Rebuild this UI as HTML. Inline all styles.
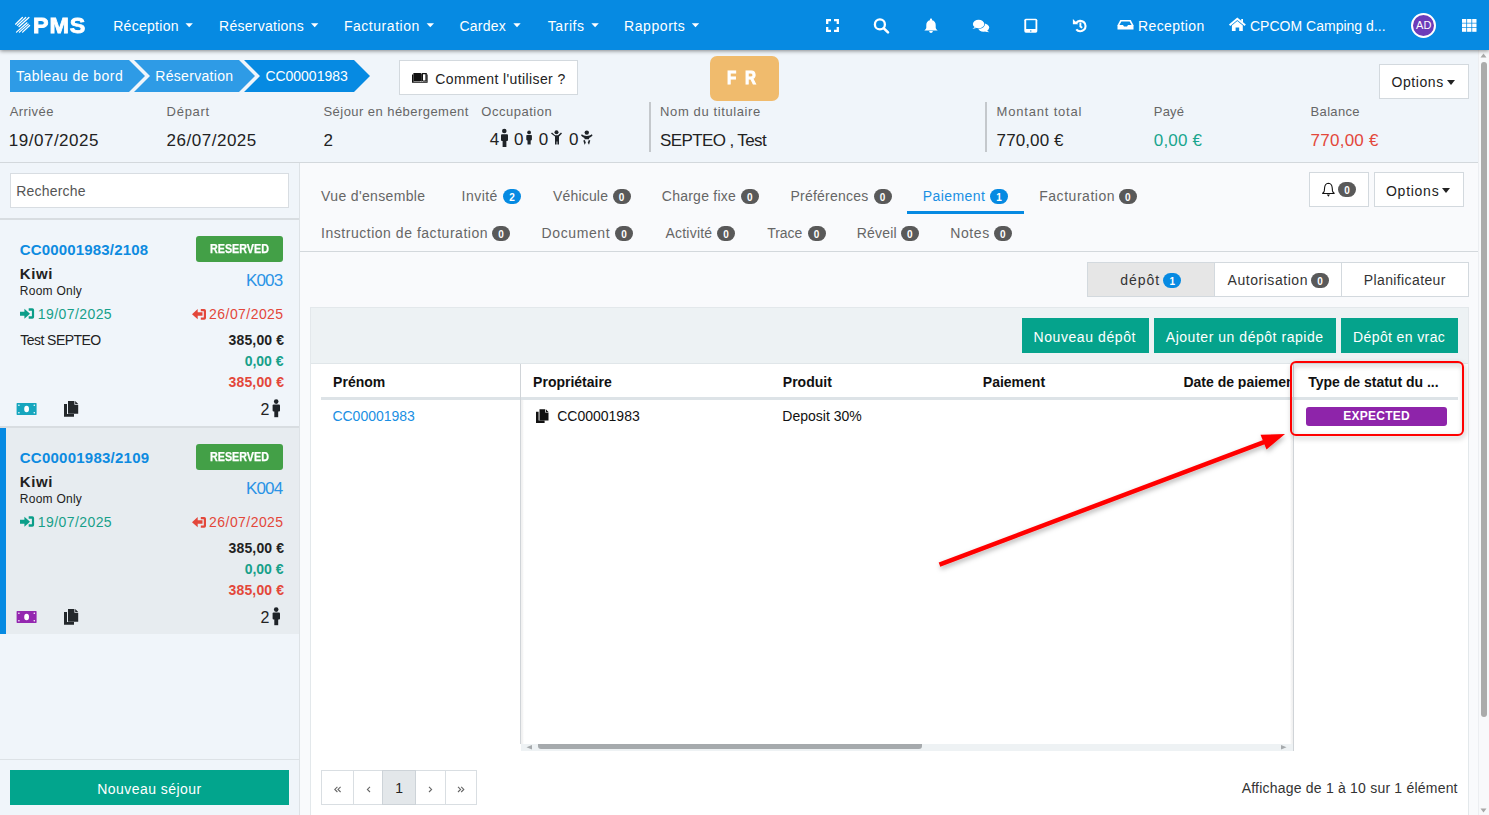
<!DOCTYPE html>
<html><head><meta charset="utf-8">
<style>
*{box-sizing:border-box;margin:0;padding:0}
html,body{width:1489px;height:815px;overflow:hidden}
body{font-family:"Liberation Sans",sans-serif;background:#f0f5fa;color:#222;position:relative}
.a{position:absolute}
.t{position:absolute;line-height:1;white-space:nowrap}
.nb{position:absolute;height:15px;border-radius:8px;background:#595959;color:#fff;font-size:10px;font-weight:bold;text-align:center;line-height:15px}
.bx{position:absolute;background:#fff;border:1px solid #d3d9de}
svg{position:absolute;overflow:visible}
</style></head>
<body>
<!-- scrollbar -->
<div class="a" style="left:1478px;top:50px;width:11px;height:765px;background:#f8f9fb;border-left:1px solid #eceef1"></div>
<div class="a" style="left:1481px;top:62px;width:6px;height:655px;background:#ababab;border-radius:4px"></div>
<!-- NAV -->
<div class="a" style="left:0;top:0;width:1489px;height:50px;background:#068ae2;box-shadow:0 1px 4px rgba(0,0,0,.45);z-index:0"></div>
<!-- header separators -->
<div class="a" style="left:649px;top:102px;width:2px;height:50px;background:#c4c8cc"></div>
<div class="a" style="left:985px;top:102px;width:2px;height:50px;background:#c4c8cc"></div>
<div class="a" style="left:0;top:162px;width:1478px;height:1px;background:#d3d8dc"></div>
<!-- breadcrumb -->
<div class="a" style="left:10px;top:60px;width:135px;height:32px;background:#2e9be6;clip-path:polygon(0 0,119px 0,135px 16px,119px 32px,0 32px)"></div>
<div class="a" style="left:134px;top:60px;width:121px;height:32px;background:#2e9be6;clip-path:polygon(0 0,105px 0,121px 16px,105px 32px,0 32px,16px 16px)"></div>
<div class="a" style="left:244px;top:60px;width:126px;height:32px;background:#068ae2;clip-path:polygon(0 0,110px 0,126px 16px,110px 32px,0 32px,16px 16px)"></div>
<!-- comment btn -->
<div class="bx" style="left:399px;top:60px;width:179px;height:35px"></div>
<!-- FR -->
<div class="a" style="left:710px;top:56px;width:69px;height:45px;background:#f0bb6d;border-radius:7px"></div>
<!-- options top -->
<div class="bx" style="left:1379px;top:64px;width:90px;height:35px"></div>
<div class="a" style="left:1447px;top:80px;width:0;height:0;border-left:4.5px solid transparent;border-right:4.5px solid transparent;border-top:5px solid #222"></div>

<!-- LEFT PANEL -->
<div class="a" style="left:299px;top:163px;width:1px;height:652px;background:#dde2e6"></div>
<div class="bx" style="left:10px;top:173px;width:279px;height:35px;border-color:#d8dde2"></div>
<div class="a" style="left:0;top:218px;width:299px;height:2px;background:#d8dde1"></div>
<div class="a" style="left:0;top:426px;width:299px;height:2px;background:#d8dde1"></div>
<div class="a" style="left:0;top:428px;width:299px;height:206px;background:#e7ecf0"></div>
<div class="a" style="left:0;top:428px;width:6px;height:206px;background:#068ae2"></div>
<div class="a" style="left:196px;top:236px;width:87px;height:26px;background:#43a047;border-radius:3px"></div>
<div class="a" style="left:196px;top:444px;width:87px;height:26px;background:#43a047;border-radius:3px"></div>
<div class="a" style="left:0;top:759px;width:299px;height:1px;background:#dde2e6"></div>
<div class="a" style="left:10px;top:770px;width:279px;height:35px;background:#02a58d"></div>

<!-- MAIN -->
<div class="a" style="left:300px;top:163px;width:1178px;height:652px;background:#f9fafc"></div>
<div class="a" style="left:300px;top:251px;width:1178px;height:1px;background:#d3d8dc"></div>
<div class="a" style="left:907px;top:211px;width:117px;height:3px;background:#068ae2"></div>
<!-- bell + options -->
<div class="bx" style="left:1309px;top:172px;width:60px;height:35px"></div>
<div class="bx" style="left:1374px;top:172px;width:90px;height:35px"></div>
<div class="a" style="left:1442px;top:188px;width:0;height:0;border-left:4.5px solid transparent;border-right:4.5px solid transparent;border-top:5px solid #222"></div>
<!-- subtabs -->
<div class="bx" style="left:1087px;top:262px;width:382px;height:35px"></div>
<div class="a" style="left:1088px;top:263px;width:127px;height:33px;background:#e6e6e6"></div>
<div class="a" style="left:1214px;top:263px;width:1px;height:33px;background:#d3d9de"></div>
<div class="a" style="left:1341px;top:263px;width:1px;height:33px;background:#d3d9de"></div>
<!-- panel -->
<div class="a" style="left:310px;top:307px;width:1159px;height:520px;background:#fff;border:1px solid #e3e8eb"></div>
<div class="a" style="left:311px;top:308px;width:1157px;height:56px;background:#edf2f4;border-bottom:1px solid #e0e6e9"></div>
<div class="a" style="left:1022px;top:318px;width:127px;height:35px;background:#05a38c"></div>
<div class="a" style="left:1154px;top:318px;width:182px;height:35px;background:#05a38c"></div>
<div class="a" style="left:1341px;top:318px;width:117px;height:35px;background:#05a38c"></div>
<!-- table -->
<div class="a" style="left:321px;top:397px;width:1137px;height:3px;background:#dde3e7"></div>
<div class="a" style="left:520px;top:364px;width:1px;height:380px;background:#d0d4d8"></div>
<div class="a" style="left:521px;top:400px;width:3px;height:344px;background:linear-gradient(to right,#f0f0f0,#f2f2f2 40%,#fff)"></div>
<div class="a" style="left:1293px;top:364px;width:1px;height:387px;background:#d0d4d8"></div>
<div class="a" style="left:1290px;top:400px;width:3px;height:344px;background:linear-gradient(to left,#f0f0f0,#f2f2f2 40%,#fff)"></div>
<div class="a" style="left:521px;top:744px;width:772px;height:7px;background:#eef2f4"></div>
<div class="a" style="left:538px;top:744px;width:384px;height:5px;background:#a6aaad;border-radius:0 0 3px 3px"></div>
<div class="a" style="left:1306px;top:407px;width:141px;height:19px;background:#8e24aa;border-radius:3px"></div>
<!-- pagination -->
<div class="bx" style="left:321px;top:770px;width:156px;height:35px;border-color:#d9dee2"></div>
<div class="a" style="left:382px;top:770px;width:34px;height:35px;background:#e3e7ea;border:1px solid #cdd3d8"></div>
<div class="a" style="left:353px;top:771px;width:1px;height:33px;background:#d9dee2"></div>
<div class="a" style="left:445px;top:771px;width:1px;height:33px;background:#d9dee2"></div>


<!-- logo stripes -->
<svg style="left:0;top:0" width="1" height="1"><g stroke="#fff" stroke-width="1.25" stroke-linecap="round">
<line x1="15.6" y1="24.2" x2="22.4" y2="17.5"/><line x1="17.3" y1="25.4" x2="25.7" y2="17.5"/><line x1="18.9" y1="26.7" x2="28.9" y2="17.5"/>
<line x1="16.5" y1="32.1" x2="27" y2="22.8"/><line x1="19.4" y1="32.1" x2="28.3" y2="24.1"/><line x1="22.6" y1="32.1" x2="29.6" y2="25.5"/>
</g></svg>
<!-- nav carets -->
<svg style="left:0;top:0" width="1" height="1"><g fill="#fff">
<path d="M185.5 23.2h7.4l-3.7 4z"/><path d="M311 23.2h7.4l-3.7 4z"/><path d="M426.6 23.2h7.4l-3.7 4z"/><path d="M513.3 23.2h7.4l-3.7 4z"/><path d="M591.4 23.2h7.4l-3.7 4z"/><path d="M691.8 23.2h7.4l-3.7 4z"/>
</g></svg>
<!-- fullscreen -->
<svg style="left:826px;top:19px" width="13" height="13" viewBox="0 0 13 13"><path d="M1.2 5V1.2H5M8 1.2h3.8V5M11.8 8v3.8H8M5 11.8H1.2V8" fill="none" stroke="#fff" stroke-width="2.3"/></svg>
<!-- search -->
<svg style="left:873px;top:18px" width="17" height="16" viewBox="0 0 17 16"><circle cx="6.9" cy="6.4" r="5" fill="none" stroke="#fff" stroke-width="2.3"/><line x1="10.6" y1="10.1" x2="15" y2="14.4" stroke="#fff" stroke-width="2.6" stroke-linecap="round"/></svg>
<!-- bell -->
<svg style="left:924px;top:18px" width="14" height="16" viewBox="0 0 14 16"><path d="M7 0.6c0.7 0 1.1 0.4 1.1 1.1v0.6c2.3 0.5 3.6 2.4 3.6 4.7v2.6c0 1 0.8 2 2 3h-13.4c1.2-1 2-2 2-3v-2.6c0-2.3 1.3-4.2 3.6-4.7v-0.6c0-0.7 0.4-1.1 1.1-1.1z" fill="#fff"/><path d="M5.2 13h3.6c0 1.1-0.8 2-1.8 2s-1.8-0.9-1.8-2z" fill="#fff"/></svg>
<!-- comments -->
<svg style="left:972px;top:19px" width="18" height="14" viewBox="0 0 18 14"><ellipse cx="11.6" cy="8.6" rx="5.6" ry="4.2" fill="#fff"/><path d="M14.6 11.4l2.8 1.9-4.3-0.6z" fill="#fff"/><ellipse cx="6.6" cy="5" rx="6.4" ry="4.8" fill="#068ae2"/><ellipse cx="6.6" cy="5" rx="5.7" ry="4.3" fill="#fff"/><path d="M2.8 8l-2.4 1.9 3.9-1z" fill="#fff"/></svg>
<!-- tablet -->
<svg style="left:1024px;top:18px" width="14" height="15" viewBox="0 0 14 15"><rect x="0.3" y="0.7" width="13" height="14" rx="1.6" fill="#fff"/><rect x="2.2" y="2.2" width="9.3" height="8.8" fill="#068ae2"/><circle cx="6.8" cy="13" r="0.7" fill="#068ae2"/></svg>
<!-- history -->
<svg style="left:1072px;top:18px" width="16" height="16" viewBox="0 0 16 16"><path d="M4.2 4.9A5.2 5.2 0 1 1 4.3 11.3" fill="none" stroke="#fff" stroke-width="2.1"/><path d="M0.9 1L0.9 6.3L6.3 6.3z" fill="#fff"/><path d="M8.4 4.4v4l1.8 1.3" fill="none" stroke="#fff" stroke-width="1.9"/></svg>
<!-- inbox -->
<svg style="left:1117px;top:19px" width="17" height="11" viewBox="0 0 17 11"><path d="M3.3 1h10.4l2.8 5.2v4.4h-16v-4.4z" fill="#fff"/><path d="M4.4 2.5h8.2l2 3.5h-3.6l-1 1.6h-3l-1-1.6h-3.6z" fill="#068ae2"/></svg>
<!-- home -->
<svg style="left:1229px;top:18px" width="17" height="14" viewBox="0 0 17 14"><path d="M0.6 7.3L8.3 0.8L16.2 7.3" fill="none" stroke="#fff" stroke-width="2"/><path d="M12.2 1h1.8v3.6l-1.8-1.4z" fill="#fff"/><path d="M2.9 7.5L8.3 3l5.5 4.5V13H10.2V9.4H6.6V13H2.9z" fill="#fff"/></svg>
<!-- avatar -->
<div class="a" style="left:1411px;top:13px;width:25px;height:25px;border-radius:50%;background:#6c3cb9;border:2px solid #fff"></div>
<div class="t" style="left:1416px;top:20px;font-size:11px;color:#fff;letter-spacing:0.2px">AD</div>
<!-- grid -->
<svg style="left:1462px;top:19px" width="15" height="13" viewBox="0 0 15 13"><g fill="#fff">
<rect x="0" y="0" width="4.3" height="3.8"/><rect x="5.1" y="0" width="4.3" height="3.8"/><rect x="10.2" y="0" width="4.3" height="3.8"/>
<rect x="0" y="4.5" width="4.3" height="3.8"/><rect x="5.1" y="4.5" width="4.3" height="3.8"/><rect x="10.2" y="4.5" width="4.3" height="3.8"/>
<rect x="0" y="9" width="4.3" height="3.8"/><rect x="5.1" y="9" width="4.3" height="3.8"/><rect x="10.2" y="9" width="4.3" height="3.8"/>
</g></svg>
<!-- book -->
<svg style="left:0;top:0" width="1" height="1"><g fill="#111">
<path d="M412 74.5h1.4v7h6.5l0.9 0.6h1.6l0.9-0.6h3.5v-7h0.8v8.3h-15.6z"/>
<path d="M413.4 73h6.8q1.4 0 1.6 1.3v7.4l-1.6-0.8h-6.8z"/>
<path d="M422.4 73h4.4v8.2h-5v-7q0-1.2 0.6-1.2zm0.6 1.2v6.2h2.4v-6.2z"/>
</g></svg>
<!-- occupation icons -->
<svg style="left:0;top:0" width="1" height="1"><g fill="#1e2328">
<circle cx="504.3" cy="131" r="2.3"/><rect x="501" y="134.2" width="7" height="6.8" rx="1"/><rect x="502.6" y="139" width="3.8" height="8"/>
<circle cx="529.1" cy="132.4" r="1.9"/><rect x="526.3" y="135" width="5.6" height="5.4" rx="0.8"/><rect x="527.5" y="139" width="3.2" height="5.5"/>
<circle cx="556.5" cy="132.3" r="2"/><path d="M551 133.6l1-1 3 2.6h3l3-2.6 1 1-3 3v7.9h-1.6v-3h-0.8v3h-1.6v-7.9z"/>
<circle cx="586.8" cy="132.6" r="2.2"/><path d="M581 135.2l0.9-0.9c1.3 1 2.7 1.6 4.9 1.6s3.6-0.6 4.9-1.6l0.9 0.9c-1 1.3-2.3 2.3-3.5 2.7v1.4h-4.6v-1.4c-1.2-0.4-2.5-1.4-3.5-2.7z"/><path d="M583.3 140.5l1.5-0.5 1 2.8-1.2 2z"/><path d="M590.3 140.5l-1.5-0.5-1 2.8 1.2 2z"/>
</g></svg>
<div class="t" style="left:33px;top:15.2px;font-size:22px;font-weight:bold;color:#fff;-webkit-text-stroke:0.8px #fff;letter-spacing:0.8px;transform:scaleX(1.06);transform-origin:0 0">PMS</div>
<div class="t" style="left:727.4px;top:68.1px;font-size:19px;font-weight:bold;color:#fff;-webkit-text-stroke:1px #fff;transform:scaleX(0.8);transform-origin:0 0">F</div>
<div class="t" style="left:744.6px;top:68.1px;font-size:19px;font-weight:bold;color:#fff;-webkit-text-stroke:1px #fff;transform:scaleX(0.8);transform-origin:0 0">R</div>
<div class="t" style="left:210px;top:242.9px;font-size:12px;font-weight:bold;color:#fff;-webkit-text-stroke:0.25px #fff;transform:scaleX(0.895);transform-origin:0 0">RESERVED</div>
<div class="t" style="left:210px;top:450.9px;font-size:12px;font-weight:bold;color:#fff;-webkit-text-stroke:0.25px #fff;transform:scaleX(0.895);transform-origin:0 0">RESERVED</div>

<!-- card icons -->
<svg style="left:0;top:0" width="1" height="1">
<g id="ci1">
<path d="M20 311.8h4.4v-3l5.6 5-5.6 5v-3H20z" fill="#0b9e89"/><path d="M28.7 308.3h3.6q1.8 0 1.8 1.8v6.8q0 1.8-1.8 1.8h-3.6v-2.4h3.2v-5.6h-3.2z" fill="#0b9e89"/>
<path d="M192 314.2l5.7-5.2v3.2h4.8v3.6h-4.8v3.5z" fill="#e3473a"/><path d="M200.8 309h3.4q1.8 0 1.8 1.8v7.1q0 1.8-1.8 1.8h-3.4v-2.2h3v-6.3h-3z" fill="#e3473a"/>
</g>
<g transform="translate(0,208)">
<path d="M20 311.8h4.4v-3l5.6 5-5.6 5v-3H20z" fill="#0b9e89"/><path d="M28.7 308.3h3.6q1.8 0 1.8 1.8v6.8q0 1.8-1.8 1.8h-3.6v-2.4h3.2v-5.6h-3.2z" fill="#0b9e89"/>
<path d="M192 314.2l5.7-5.2v3.2h4.8v3.6h-4.8v3.5z" fill="#e3473a"/><path d="M200.8 309h3.4q1.8 0 1.8 1.8v7.1q0 1.8-1.8 1.8h-3.4v-2.2h3v-6.3h-3z" fill="#e3473a"/>
</g>
<!-- money -->
<g><rect x="16.6" y="403.1" width="20" height="11.8" rx="0.6" fill="#16a6be"/><ellipse cx="26.6" cy="409" rx="2.4" ry="3.3" fill="#fff"/>
<g fill="#fff"><circle cx="18.9" cy="405.2" r="0.8"/><circle cx="34.3" cy="405.2" r="0.8"/><circle cx="18.9" cy="412.8" r="0.8"/><circle cx="34.3" cy="412.8" r="0.8"/></g></g>
<g transform="translate(0,208)"><rect x="16.6" y="403.1" width="20" height="11.8" rx="0.6" fill="#9427b0"/><ellipse cx="26.6" cy="409" rx="2.4" ry="3.3" fill="#fff"/>
<g fill="#fff"><circle cx="18.9" cy="405.2" r="0.8"/><circle cx="34.3" cy="405.2" r="0.8"/><circle cx="18.9" cy="412.8" r="0.8"/><circle cx="34.3" cy="412.8" r="0.8"/></g></g>
<!-- copy -->
<g fill="#23272b"><path d="M64 403.9h3v10h7v2.9H64z"/><path d="M68 400.9h6.4v3.8h3.8v9.1H68z"/><path d="M75.2 400.9l3 3h-3z"/></g>
<g fill="#23272b" transform="translate(0,208)"><path d="M64 403.9h3v10h7v2.9H64z"/><path d="M68 400.9h6.4v3.8h3.8v9.1H68z"/><path d="M75.2 400.9l3 3h-3z"/></g>
<!-- person -->
<g fill="#1e2328"><circle cx="276.2" cy="401.6" r="2.3"/><rect x="272.6" y="404.6" width="7.4" height="7" rx="1"/><rect x="274.3" y="410" width="3.9" height="7.2"/></g>
<g fill="#1e2328" transform="translate(0,208)"><circle cx="276.2" cy="401.6" r="2.3"/><rect x="272.6" y="404.6" width="7.4" height="7" rx="1"/><rect x="274.3" y="410" width="3.9" height="7.2"/></g>
<!-- table copy icon -->
<g fill="#111"><path d="M536 411.8h2.6v8.6h6v2.6H536z"/><path d="M539.5 409.2h5.6v3.3h3.4v8H539.5z"/><path d="M545.8 409.2l2.7 2.7h-2.7z"/></g>
<!-- bell outline tabs -->
<path d="M1328.4 183.3c-2.3 0.2-3.6 2-3.8 4.4l-0.3 3.2c-0.2 1.2-0.9 2-2 2.6h12.2c-1.1-0.6-1.8-1.4-2-2.6l-0.3-3.2c-0.2-2.4-1.5-4.2-3.8-4.4z" fill="none" stroke="#111" stroke-width="1.1"/>
<path d="M1326.8 194.6h3.2l-1.6 2.2z" fill="#111"/>
<!-- pagination glyph chevrons -->
<g fill="none" stroke="#666" stroke-width="1.1">
<path d="M337.4 786.8l-2.6 2.6 2.6 2.6M340.6 786.8l-2.6 2.6 2.6 2.6"/>
<path d="M370 786.8l-2.6 2.6 2.6 2.6"/>
<path d="M429 786.8l2.6 2.6-2.6 2.6"/>
<path d="M458 786.8l2.6 2.6-2.6 2.6M461.2 786.8l2.6 2.6-2.6 2.6"/>
</g>
<!-- scrollbar arrows -->
<path d="M1480.5 57.5h6l-3-4z" fill="#a8a8a8"/>
<path d="M1480.5 808.5h6l-3 4z" fill="#a8a8a8"/>
<path d="M532 745l-5.5 2.2 5.5 2.2z" fill="#a6aaad"/>
<path d="M1287 745l-5.5 2.2 5.5 2.2z" fill="#a6aaad" transform="rotate(180 1284 747.2)"/>
</svg>
<!-- red rect + arrow -->
<svg style="left:0;top:0;z-index:3" width="1" height="1">
<defs><filter id="sh" x="-20%" y="-20%" width="140%" height="140%"><feDropShadow dx="1" dy="2.5" stdDeviation="2.8" flood-color="#000" flood-opacity="0.3"/></filter></defs>
<g filter="url(#sh)">
<rect x="1291" y="362" width="172" height="73" rx="5" fill="none" stroke="#ff0000" stroke-width="2"/>
<line x1="939.5" y1="564.6" x2="1266" y2="441.3" stroke="#ff0000" stroke-width="4.5"/>
<path d="M1285 434L1260.5 434.8L1266.5 449.5z" fill="#ff0000"/>
</g>
</svg>

<div class="nb" style="left:503.0px;top:189.0px;width:18.0px;background:#068ae2"></div><div class="t" style="left:509.2px;top:193.3px;font-size:10px;font-weight:bold;color:#fff">2</div>
<div class="nb" style="left:612.5px;top:189.0px;width:18.0px;background:#595959"></div><div class="t" style="left:618.7px;top:193.3px;font-size:10px;font-weight:bold;color:#fff">0</div>
<div class="nb" style="left:740.8px;top:189.0px;width:18.0px;background:#595959"></div><div class="t" style="left:747.0px;top:193.3px;font-size:10px;font-weight:bold;color:#fff">0</div>
<div class="nb" style="left:873.5px;top:189.0px;width:18.0px;background:#595959"></div><div class="t" style="left:879.7px;top:193.3px;font-size:10px;font-weight:bold;color:#fff">0</div>
<div class="nb" style="left:989.9px;top:189.0px;width:18.1px;background:#068ae2"></div><div class="t" style="left:996.2px;top:193.3px;font-size:10px;font-weight:bold;color:#fff">1</div>
<div class="nb" style="left:1118.8px;top:189.0px;width:18.0px;background:#595959"></div><div class="t" style="left:1125.0px;top:193.3px;font-size:10px;font-weight:bold;color:#fff">0</div>
<div class="nb" style="left:492.0px;top:226.0px;width:18.0px;background:#595959"></div><div class="t" style="left:498.2px;top:230.3px;font-size:10px;font-weight:bold;color:#fff">0</div>
<div class="nb" style="left:615.0px;top:226.0px;width:18.0px;background:#595959"></div><div class="t" style="left:621.2px;top:230.3px;font-size:10px;font-weight:bold;color:#fff">0</div>
<div class="nb" style="left:717.0px;top:226.0px;width:18.0px;background:#595959"></div><div class="t" style="left:723.2px;top:230.3px;font-size:10px;font-weight:bold;color:#fff">0</div>
<div class="nb" style="left:807.5px;top:226.0px;width:18.0px;background:#595959"></div><div class="t" style="left:813.7px;top:230.3px;font-size:10px;font-weight:bold;color:#fff">0</div>
<div class="nb" style="left:900.8px;top:226.0px;width:18.0px;background:#595959"></div><div class="t" style="left:907.0px;top:230.3px;font-size:10px;font-weight:bold;color:#fff">0</div>
<div class="nb" style="left:993.7px;top:226.0px;width:18.0px;background:#595959"></div><div class="t" style="left:999.9px;top:230.3px;font-size:10px;font-weight:bold;color:#fff">0</div>
<div class="nb" style="left:1338.2px;top:182.0px;width:17.8px;background:#595959"></div><div class="t" style="left:1344.3px;top:186.3px;font-size:10px;font-weight:bold;color:#fff">0</div>
<div class="nb" style="left:1163.2px;top:272.5px;width:18.0px;background:#068ae2"></div><div class="t" style="left:1169.4px;top:276.8px;font-size:10px;font-weight:bold;color:#fff">1</div>
<div class="nb" style="left:1311.0px;top:272.5px;width:18.0px;background:#595959"></div><div class="t" style="left:1317.2px;top:276.8px;font-size:10px;font-weight:bold;color:#fff">0</div>
<div class="t" style="left:113.2px;top:19.1px;font-size:14px;color:#fff;letter-spacing:0.29px">Réception</div>
<div class="t" style="left:219.1px;top:19.1px;font-size:14px;color:#fff;letter-spacing:0.26px">Réservations</div>
<div class="t" style="left:343.9px;top:19.1px;font-size:14px;color:#fff;letter-spacing:0.54px">Facturation</div>
<div class="t" style="left:459.5px;top:19.1px;font-size:14px;color:#fff;letter-spacing:0.20px">Cardex</div>
<div class="t" style="left:547.8px;top:19.1px;font-size:14px;color:#fff;letter-spacing:0.56px">Tarifs</div>
<div class="t" style="left:624.1px;top:19.1px;font-size:14px;color:#fff;letter-spacing:0.56px">Rapports</div>
<div class="t" style="left:1138.0px;top:19.1px;font-size:14px;color:#fff;letter-spacing:0.40px">Reception</div>
<div class="t" style="left:1250.0px;top:19.1px;font-size:14px;color:#fff;letter-spacing:0.01px">CPCOM Camping d...</div>
<div class="t" style="left:16.1px;top:68.8px;font-size:14px;color:#fff;letter-spacing:0.44px">Tableau de bord</div>
<div class="t" style="left:155.3px;top:68.8px;font-size:14px;color:#fff;letter-spacing:0.31px">Réservation</div>
<div class="t" style="left:265.4px;top:68.8px;font-size:14px;color:#fff;letter-spacing:-0.02px">CC00001983</div>
<div class="t" style="left:435.3px;top:71.6px;font-size:14px;color:#222;letter-spacing:0.39px">Comment l&#x27;utiliser ?</div>
<div class="t" style="left:1391.4px;top:74.8px;font-size:14px;color:#222;letter-spacing:0.60px">Options</div>
<div class="t" style="left:9.8px;top:105.1px;font-size:13px;color:#666;letter-spacing:0.40px">Arrivée</div>
<div class="t" style="left:166.6px;top:105.1px;font-size:13px;color:#666;letter-spacing:0.72px">Départ</div>
<div class="t" style="left:323.5px;top:105.1px;font-size:13px;color:#666;letter-spacing:0.45px">Séjour en hébergement</div>
<div class="t" style="left:481.3px;top:105.1px;font-size:13px;color:#666;letter-spacing:0.52px">Occupation</div>
<div class="t" style="left:660.1px;top:105.1px;font-size:13px;color:#666;letter-spacing:0.61px">Nom du titulaire</div>
<div class="t" style="left:996.6px;top:105.1px;font-size:13px;color:#666;letter-spacing:0.81px">Montant total</div>
<div class="t" style="left:1153.8px;top:105.1px;font-size:13px;color:#666;letter-spacing:0.17px">Payé</div>
<div class="t" style="left:1310.6px;top:105.1px;font-size:13px;color:#666;letter-spacing:0.32px">Balance</div>
<div class="t" style="left:8.8px;top:132.0px;font-size:17px;color:#222;letter-spacing:0.51px">19/07/2025</div>
<div class="t" style="left:166.6px;top:132.0px;font-size:17px;color:#222;letter-spacing:0.51px">26/07/2025</div>
<div class="t" style="left:323.5px;top:132.0px;font-size:17px;color:#222">2</div>
<div class="t" style="left:660.1px;top:132.0px;font-size:17px;color:#222;letter-spacing:-0.62px">SEPTEO , Test</div>
<div class="t" style="left:996.6px;top:132.0px;font-size:17px;color:#222;letter-spacing:0.11px">770,00 €</div>
<div class="t" style="left:1153.8px;top:132.0px;font-size:17px;color:#18a58d;letter-spacing:0.16px">0,00 €</div>
<div class="t" style="left:1310.6px;top:132.0px;font-size:17px;color:#e3473a;letter-spacing:0.24px">770,00 €</div>
<div class="t" style="left:489.7px;top:131.3px;font-size:17px;color:#222">4</div>
<div class="t" style="left:514.0px;top:131.3px;font-size:17px;color:#222">0</div>
<div class="t" style="left:538.8px;top:131.3px;font-size:17px;color:#222">0</div>
<div class="t" style="left:568.9px;top:131.3px;font-size:17px;color:#222">0</div>
<div class="t" style="left:16.2px;top:184.0px;font-size:14px;color:#555;letter-spacing:0.21px">Recherche</div>
<div class="t" style="left:19.8px;top:241.8px;font-size:15px;color:#0d8be0;font-weight:bold;letter-spacing:0.16px">CC00001983/2108</div>
<div class="t" style="left:19.8px;top:265.9px;font-size:15px;color:#222;font-weight:bold;letter-spacing:0.57px">Kiwi</div>
<div class="t" style="left:19.8px;top:285.1px;font-size:12px;color:#222;letter-spacing:0.25px">Room Only</div>
<div class="t" style="left:245.9px;top:271.8px;font-size:17px;color:#2a93e6;letter-spacing:-0.80px">K003</div>
<div class="t" style="left:37.8px;top:306.6px;font-size:14px;color:#17a08a;letter-spacing:0.42px">19/07/2025</div>
<div class="t" style="left:209.1px;top:306.6px;font-size:14px;color:#e3473a;letter-spacing:0.44px">26/07/2025</div>
<div class="t" style="left:20.3px;top:332.7px;font-size:14px;color:#222;letter-spacing:-0.55px">Test SEPTEO</div>
<div class="t" style="left:228.5px;top:332.7px;font-size:14px;color:#222;font-weight:bold;letter-spacing:0.16px">385,00 €</div>
<div class="t" style="left:244.7px;top:353.8px;font-size:14px;color:#17a08a;font-weight:bold;letter-spacing:-0.02px">0,00 €</div>
<div class="t" style="left:228.5px;top:374.7px;font-size:14px;color:#e3473a;font-weight:bold;letter-spacing:0.16px">385,00 €</div>
<div class="t" style="left:260.4px;top:401.9px;font-size:16px;color:#222">2</div>
<div class="t" style="left:19.8px;top:449.8px;font-size:15px;color:#0d8be0;font-weight:bold;letter-spacing:0.24px">CC00001983/2109</div>
<div class="t" style="left:19.8px;top:473.9px;font-size:15px;color:#222;font-weight:bold;letter-spacing:0.57px">Kiwi</div>
<div class="t" style="left:19.8px;top:493.1px;font-size:12px;color:#222;letter-spacing:0.25px">Room Only</div>
<div class="t" style="left:245.9px;top:479.8px;font-size:17px;color:#2a93e6;letter-spacing:-0.80px">K004</div>
<div class="t" style="left:37.8px;top:514.6px;font-size:14px;color:#17a08a;letter-spacing:0.42px">19/07/2025</div>
<div class="t" style="left:209.1px;top:514.6px;font-size:14px;color:#e3473a;letter-spacing:0.44px">26/07/2025</div>
<div class="t" style="left:228.5px;top:540.7px;font-size:14px;color:#222;font-weight:bold;letter-spacing:0.16px">385,00 €</div>
<div class="t" style="left:244.7px;top:561.8px;font-size:14px;color:#17a08a;font-weight:bold;letter-spacing:-0.02px">0,00 €</div>
<div class="t" style="left:228.5px;top:582.7px;font-size:14px;color:#e3473a;font-weight:bold;letter-spacing:0.16px">385,00 €</div>
<div class="t" style="left:260.4px;top:609.9px;font-size:16px;color:#222">2</div>
<div class="t" style="left:97.3px;top:781.8px;font-size:14px;color:#fff;letter-spacing:0.44px">Nouveau séjour</div>
<div class="t" style="left:321.1px;top:189.0px;font-size:14px;color:#666;letter-spacing:0.35px">Vue d&#x27;ensemble</div>
<div class="t" style="left:461.6px;top:189.0px;font-size:14px;color:#666;letter-spacing:0.46px">Invité</div>
<div class="t" style="left:553.1px;top:189.0px;font-size:14px;color:#666;letter-spacing:0.16px">Véhicule</div>
<div class="t" style="left:661.8px;top:189.0px;font-size:14px;color:#666;letter-spacing:0.24px">Charge fixe</div>
<div class="t" style="left:790.4px;top:189.0px;font-size:14px;color:#666;letter-spacing:0.25px">Préférences</div>
<div class="t" style="left:1039.2px;top:189.0px;font-size:14px;color:#666;letter-spacing:0.54px">Facturation</div>
<div class="t" style="left:922.7px;top:189.0px;font-size:14px;color:#1a8fe3;letter-spacing:0.43px">Paiement</div>
<div class="t" style="left:321.0px;top:226.0px;font-size:14px;color:#666;letter-spacing:0.53px">Instruction de facturation</div>
<div class="t" style="left:541.6px;top:226.0px;font-size:14px;color:#666;letter-spacing:0.60px">Document</div>
<div class="t" style="left:665.4px;top:226.0px;font-size:14px;color:#666;letter-spacing:0.23px">Activité</div>
<div class="t" style="left:767.3px;top:226.0px;font-size:14px;color:#666;letter-spacing:-0.10px">Trace</div>
<div class="t" style="left:856.7px;top:226.0px;font-size:14px;color:#666;letter-spacing:0.20px">Réveil</div>
<div class="t" style="left:950.2px;top:226.0px;font-size:14px;color:#666;letter-spacing:0.62px">Notes</div>
<div class="t" style="left:1386.0px;top:183.6px;font-size:14px;color:#222;letter-spacing:0.73px">Options</div>
<div class="t" style="left:1120.2px;top:273.0px;font-size:14px;color:#333;letter-spacing:0.97px">dépôt</div>
<div class="t" style="left:1227.5px;top:273.0px;font-size:14px;color:#333;letter-spacing:0.55px">Autorisation</div>
<div class="t" style="left:1363.8px;top:273.0px;font-size:14px;color:#333;letter-spacing:0.38px">Planificateur</div>
<div class="t" style="left:1033.5px;top:329.5px;font-size:14px;color:#fff;letter-spacing:0.58px">Nouveau dépôt</div>
<div class="t" style="left:1165.8px;top:329.5px;font-size:14px;color:#fff;letter-spacing:0.53px">Ajouter un dépôt rapide</div>
<div class="t" style="left:1353.1px;top:329.5px;font-size:14px;color:#fff;letter-spacing:0.38px">Dépôt en vrac</div>
<div class="t" style="left:333.1px;top:375.2px;font-size:14px;color:#111;font-weight:bold">Prénom</div>
<div class="t" style="left:533.1px;top:375.2px;font-size:14px;color:#111;font-weight:bold">Propriétaire</div>
<div class="t" style="left:782.8px;top:375.2px;font-size:14px;color:#111;font-weight:bold">Produit</div>
<div class="t" style="left:982.8px;top:375.2px;font-size:14px;color:#111;font-weight:bold">Paiement</div>
<div class="t" style="left:1308.2px;top:375.2px;font-size:14px;color:#111;font-weight:bold">Type de statut du ...</div>
<div class="t" style="left:1183.4px;top:375.2px;font-size:14px;color:#111;font-weight:bold;width:109px;overflow:hidden">Date de paiemen</div>
<div class="t" style="left:332.4px;top:409.1px;font-size:14px;color:#1a8fe3">CC00001983</div>
<div class="t" style="left:557.2px;top:409.1px;font-size:14px;color:#111">CC00001983</div>
<div class="t" style="left:782.3px;top:409.1px;font-size:14px;color:#111">Deposit 30%</div>
<div class="t" style="left:1343.2px;top:409.9px;font-size:12px;color:#fff;font-weight:bold;letter-spacing:0.27px">EXPECTED</div>
<div class="t" style="left:395.3px;top:781.0px;font-size:14px;color:#222">1</div>
<div class="t" style="left:1241.7px;top:781.2px;font-size:14px;color:#333;letter-spacing:0.21px">Affichage de 1 à 10 sur 1 élément</div>
</body></html>
